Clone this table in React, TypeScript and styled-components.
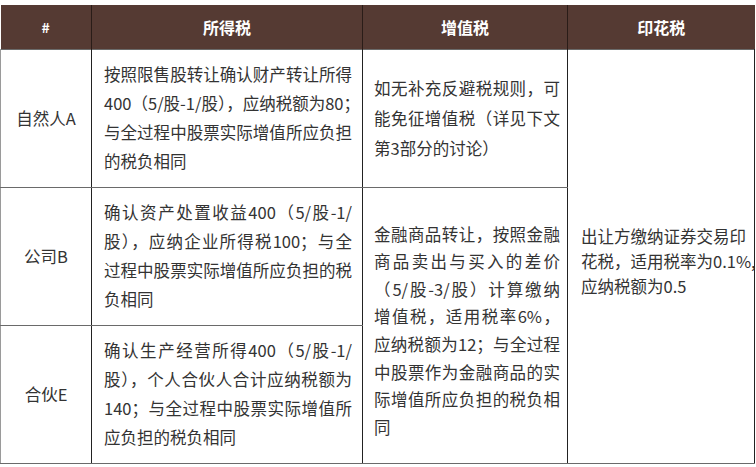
import React from "react";
import styled, { createGlobalStyle } from "styled-components";

const Global = createGlobalStyle`
  html, body { margin: 0; padding: 0; background: #ffffff; }
  body { font-family: "Noto Sans CJK SC", "Noto Sans", sans-serif; color: #333333; }
`;

const Table = styled.table`
  margin-top: 5px;
  width: 754px;
  table-layout: fixed;
  border-collapse: collapse;
  border-bottom: 1px solid #222222;
`;

const HeadRow = styled.tr`
  height: 44px;
  background: #553a33;
`;

const HeadCell = styled.th<{ $size?: number }>`
  padding: 0;
  color: #ffffff;
  font-weight: 700;
  font-size: ${(p) => p.$size ?? 16}px;
  text-align: center;
  vertical-align: middle;
  border-left: 1px solid #2a1c18;
  &:first-child { border-left: none; }
`;

const BodyRow = styled.tr`
  height: 138px;
`;

const Cell = styled.td<{ $center?: boolean; $pl?: number; $pr?: number; $lh?: number; $pt?: number }>`
  padding: ${(p) => p.$pt ?? 0}px ${(p) => p.$pr ?? 10}px 0 ${(p) => p.$pl ?? 12}px;
  vertical-align: middle;
  font-size: 16.5px;
  line-height: ${(p) => p.$lh ?? 29}px;
  color: #333333;
  text-align: ${(p) => (p.$center ? "center" : "left")};
  border-left: 1px solid #222222;
  border-right: 1px solid #222222;
  border-top: 1px solid #6a6a6a;
  border-bottom: 1px solid #6a6a6a;
  &:first-child { border-left: 1px solid #9a9a9a; }
`;

const Line = styled.div<{ $last?: boolean }>`
  text-align: justify;
  text-align-last: ${(p) => (p.$last ? "left" : "justify")};
  white-space: nowrap;
`;

const Lines: React.FC<{ lines: string[] }> = ({ lines }) => (
  <>
    {lines.map((l, i) => (
      <Line key={i} $last={i === lines.length - 1}>
        {l}
      </Line>
    ))}
  </>
);

export default function App() {
  return (
    <>
      <Global />
      <Table>
        <colgroup>
          <col style={{ width: 91 }} />
          <col style={{ width: 271 }} />
          <col style={{ width: 205 }} />
          <col style={{ width: 187 }} />
        </colgroup>
        <thead>
          <HeadRow>
            <HeadCell $size={14}>#</HeadCell>
            <HeadCell>所得税</HeadCell>
            <HeadCell>增值税</HeadCell>
            <HeadCell>印花税</HeadCell>
          </HeadRow>
        </thead>
        <tbody>
          <BodyRow>
            <Cell $center $pl={0} $pr={0}>自然人A</Cell>
            <Cell>
              <Lines
                lines={[
                  "按照限售股转让确认财产转让所得",
                  "400（5/股-1/股），应纳税额为80；",
                  "与全过程中股票实际增值所应负担",
                  "的税负相同",
                ]}
              />
            </Cell>
            <Cell $pl={11} $pr={7} $lh={30}>
              <Lines
                lines={[
                  "如无补充反避税规则，可",
                  "能免征增值税（详见下文",
                  "第3部分的讨论）",
                ]}
              />
            </Cell>
            <Cell rowSpan={3} $pl={13} $pr={11} $lh={25} $pt={10}>
              <Lines
                lines={[
                  "出让方缴纳证券交易印",
                  "花税，适用税率为0.1%,",
                  "应纳税额为0.5",
                ]}
              />
            </Cell>
          </BodyRow>
          <BodyRow>
            <Cell $center $pl={0} $pr={0}>公司B</Cell>
            <Cell>
              <Lines
                lines={[
                  "确认资产处置收益400（5/股-1/",
                  "股），应纳企业所得税100；与全",
                  "过程中股票实际增值所应负担的税",
                  "负相同",
                ]}
              />
            </Cell>
            <Cell rowSpan={2} $pl={11} $pr={7} $lh={27.6} $pt={12}>
              <Lines
                lines={[
                  "金融商品转让，按照金融",
                  "商品卖出与买入的差价",
                  "（5/股-3/股）计算缴纳",
                  "增值税，适用税率6%，",
                  "应纳税额为12；与全过程",
                  "中股票作为金融商品的实",
                  "际增值所应负担的税负相",
                  "同",
                ]}
              />
            </Cell>
          </BodyRow>
          <BodyRow>
            <Cell $center $pl={0} $pr={0}>合伙E</Cell>
            <Cell>
              <Lines
                lines={[
                  "确认生产经营所得400（5/股-1/",
                  "股），个人合伙人合计应纳税额为",
                  "140；与全过程中股票实际增值所",
                  "应负担的税负相同",
                ]}
              />
            </Cell>
          </BodyRow>
        </tbody>
      </Table>
    </>
  );
}
